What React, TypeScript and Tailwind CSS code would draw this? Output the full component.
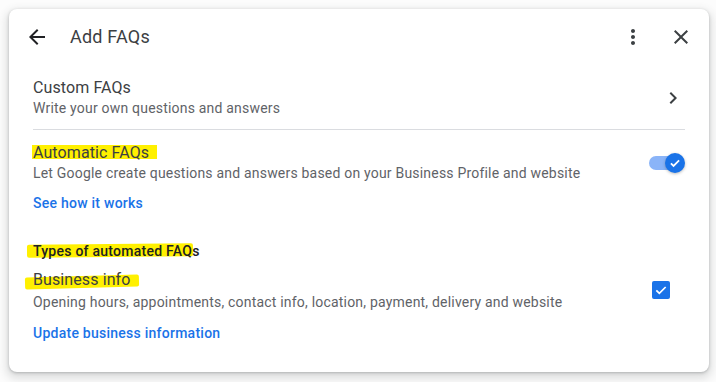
const Icon = ({ d, className }: { d: string; className?: string }) => (
  <svg viewBox="0 0 24 24" width={24} height={24} className={className} fill="currentColor">
    <path d={d} />
  </svg>
);

const ARROW_BACK = 'M20 11H7.83l5.59-5.59L12 4l-8 8 8 8 1.41-1.41L7.83 13H20v-2z';
const MORE_VERT =
  'M12 8c1.1 0 2-.9 2-2s-.9-2-2-2-2 .9-2 2 .9 2 2 2zm0 2c-1.1 0-2 .9-2 2s.9 2 2 2 2-.9 2-2-.9-2-2-2zm0 6c-1.1 0-2 .9-2 2s.9 2 2 2 2-.9 2-2-.9-2-2-2z';
const CLOSE =
  'M19 6.41L17.59 5 12 10.59 6.41 5 5 6.41 10.59 12 5 17.59 6.41 19 12 13.41 17.59 19 19 17.59 13.41 12z';
const CHEVRON = 'M10 6L8.59 7.41 13.17 12l-4.58 4.59L10 18l6-6z';

export default function App() {
  return (
    <div className="w-[716px] h-[382px] bg-[#fcfcfc] pt-[9px] pl-[9px] font-['Roboto',sans-serif] overflow-hidden">
      <div className="w-[700px] h-[363px] bg-white rounded-lg shadow-[0_1px_3px_rgba(60,64,67,0.3),0_4px_8px_3px_rgba(60,64,67,0.15)] flex flex-col">
        {/* header */}
        <div className="h-[56px] flex items-center pl-4 pr-4 text-[#3c4043]">
          <Icon d={ARROW_BACK} className="text-[#202124]" />
          <span className="ml-[21px] text-[18px] leading-6 tracking-[0.2px] text-[#3c4043]">Add FAQs</span>
          <div className="ml-auto flex items-center gap-6">
            <Icon d={MORE_VERT} />
            <Icon d={CLOSE} />
          </div>
        </div>

        <div className="px-6 pt-3 flex flex-col">
          {/* custom faqs */}
          <div className="flex items-center">
            <div className="flex flex-col">
              <span className="text-[16px] leading-[21px] tracking-[0.1px] text-[#3c4043]">Custom FAQs</span>
              <span className="text-[14px] leading-5 tracking-[0.2px] text-[#5f6368]">Write your own questions and answers</span>
            </div>
            <Icon d={CHEVRON} className="ml-auto text-[#3c4043]" />
          </div>
          <div className="mt-[11px] h-px bg-[#dadce0]" />

          {/* automatic faqs */}
          <div className="mt-[12px] flex items-center">
            <div className="flex flex-col">
              <span className="relative self-start text-[16px] leading-[21px] tracking-[0.1px] text-[#3c4043]">
                <span className="absolute left-[-1px] top-[3px] w-[125px] h-[14px] bg-[#fff000]" />
                <span className="relative">Automatic FAQs</span>
              </span>
              <span className="text-[14px] leading-5 tracking-[0.2px] text-[#5f6368]">
                Let Google create questions and answers based on your Business Profile and website
              </span>
            </div>
            <div className="ml-auto relative w-[36px] h-[20px] flex items-center">
              <div className="w-[32px] h-[14px] rounded-full bg-[#8ab4f8]" />
              <div className="absolute right-0 top-0 w-[20px] h-[20px] rounded-full bg-[#1a73e8] shadow-[0_1px_3px_rgba(60,64,67,0.35)] flex items-center justify-center">
                <svg viewBox="0 0 24 24" width={14} height={14} fill="none" stroke="white" strokeWidth={3}>
                  <path d="M5 12.5l4.5 4.5L19 7.5" />
                </svg>
              </div>
            </div>
          </div>
          <span className="mt-[10px] text-[14px] leading-5 tracking-[0.25px] font-medium text-[#1a73e8]">See how it works</span>

          {/* types */}
          <span className="relative self-start mt-[28px] text-[14px] leading-5 tracking-[0.25px] font-medium text-[#202124]">
            <span className="absolute left-[-6px] top-[3px] w-[166px] h-[13px] bg-[#fff000] rounded-[2px] -rotate-[0.5deg]" />
            <span className="relative">Types of automated FAQs</span>
          </span>

          <div className="mt-[7px] flex items-center">
            <div className="flex flex-col">
              <span className="relative self-start text-[16px] leading-6 tracking-[0.1px] text-[#3c4043]">
                <span className="absolute left-[-8px] top-[8px] w-[114px] h-[12px] bg-[#fff000] rounded-[2px] -rotate-[1.5deg]" />
                <span className="relative">Business info</span>
              </span>
              <span className="text-[14px] leading-5 tracking-[0.2px] text-[#5f6368]">
                Opening hours, appointments, contact info, location, payment, delivery and website
              </span>
            </div>
            <div className="ml-auto w-[48px] flex items-center justify-center">
              <div className="w-[18px] h-[18px] rounded-[2px] bg-[#1a73e8] flex items-center justify-center">
                <svg viewBox="0 0 24 24" width={16} height={16} fill="none" stroke="white" strokeWidth={2.6}>
                  <path d="M5 12.5l4.5 4.5L19 7.5" />
                </svg>
              </div>
            </div>
          </div>
          <span className="mt-[11px] self-start text-[14px] leading-5 tracking-[0.25px] font-medium text-[#1a73e8]">Update business information</span>
        </div>
      </div>
    </div>
  );
}
